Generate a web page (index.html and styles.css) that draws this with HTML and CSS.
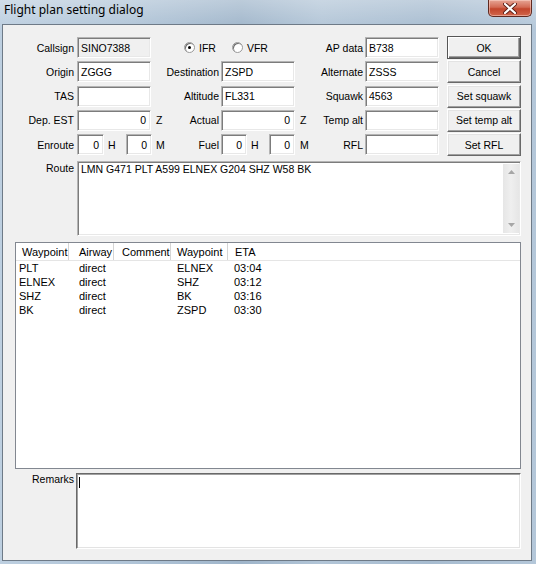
FILE: index.html
```html
<!DOCTYPE html>
<html>
<head>
<meta charset="utf-8">
<link rel="stylesheet" href="styles.css">
</head>
<body>
<div class="window">
  <div class="titlebar">
    <span class="title">Flight plan setting dialog</span>
    <div class="close">
      <svg width="14" height="11" viewBox="0 0 14 11"><path d="M2 1 L12 10 M12 1 L2 10" stroke="#5a1e16" stroke-width="4" stroke-linecap="round"/><path d="M2 1 L12 10 M12 1 L2 10" stroke="#ffffff" stroke-width="2.2" stroke-linecap="round"/></svg>
    </div>
  </div>
  <div class="client">
    <div class="form">
      <!-- row 1 -->
      <div class="lbl l1">Callsign</div>
      <div class="edit ro">SINO7388</div>
      <div class="radios">
        <span class="radio on"></span><span class="rtext">IFR</span>
        <span class="radio vfr"></span><span class="rtext">VFR</span>
      </div>
      <div class="lbl l3">AP data</div>
      <div class="edit">B738</div>
      <div class="sp"></div>
      <div class="btn default">OK</div>
      <!-- row 2 -->
      <div class="lbl l1">Origin</div>
      <div class="edit">ZGGG</div>
      <div class="lbl l2">Destination</div>
      <div class="edit">ZSPD</div>
      <div class="lbl l3">Alternate</div>
      <div class="edit">ZSSS</div>
      <div class="sp"></div>
      <div class="btn">Cancel</div>
      <!-- row 3 -->
      <div class="lbl l1">TAS</div>
      <div class="edit"></div>
      <div class="lbl l2">Altitude</div>
      <div class="edit">FL331</div>
      <div class="lbl l3">Squawk</div>
      <div class="edit">4563</div>
      <div class="sp"></div>
      <div class="btn">Set squawk</div>
      <!-- row 4 -->
      <div class="lbl l1">Dep. EST</div>
      <div class="edit num">0</div>
      <div class="lbl l2 unitrow"><span class="unit">Z</span><span>Actual</span></div>
      <div class="edit num">0</div>
      <div class="lbl l3 unitrow"><span class="unit">Z</span><span>Temp alt</span></div>
      <div class="edit"></div>
      <div class="sp"></div>
      <div class="btn">Set temp alt</div>
      <!-- row 5 -->
      <div class="lbl l1">Enroute</div>
      <div class="pair">
        <div class="edit num small a">0</div><span class="hu">H</span><div class="edit num small b">0</div>
      </div>
      <div class="lbl l2 unitrow"><span class="unit">M</span><span>Fuel</span></div>
      <div class="pair">
        <div class="edit num small b">0</div><span class="hu">H</span><div class="edit num small b">0</div>
      </div>
      <div class="lbl l3 unitrow"><span class="unit">M</span><span>RFL</span></div>
      <div class="edit"></div>
      <div class="sp"></div>
      <div class="btn">Set RFL</div>
    </div>

    <div class="route">
      <div class="lbl l1 top">Route</div>
      <div class="edit box">
        <div class="boxtext">LMN G471 PLT A599 ELNEX G204 SHZ W58 BK</div>
        <div class="vscroll">
          <svg width="7" height="4" viewBox="0 0 7 4"><path d="M0 4 L3.5 0 L7 4 Z" fill="#a6a6a6"/></svg>
          <svg width="7" height="4" viewBox="0 0 7 4"><path d="M0 0 L3.5 4 L7 0 Z" fill="#a6a6a6"/></svg>
        </div>
      </div>
    </div>

    <div class="list">
      <div class="lhead">
        <div class="hc c1">Waypoint</div>
        <div class="hc c2">Airway</div>
        <div class="hc c3">Comment</div>
        <div class="hc c4">Waypoint</div>
        <div class="hc c5">ETA</div>
      </div>
      <div class="lrow"><div class="bc c1">PLT</div><div class="bc c2">direct</div><div class="bc c3"></div><div class="bc c4">ELNEX</div><div class="bc c5">03:04</div></div>
      <div class="lrow"><div class="bc c1">ELNEX</div><div class="bc c2">direct</div><div class="bc c3"></div><div class="bc c4">SHZ</div><div class="bc c5">03:12</div></div>
      <div class="lrow"><div class="bc c1">SHZ</div><div class="bc c2">direct</div><div class="bc c3"></div><div class="bc c4">BK</div><div class="bc c5">03:16</div></div>
      <div class="lrow"><div class="bc c1">BK</div><div class="bc c2">direct</div><div class="bc c3"></div><div class="bc c4">ZSPD</div><div class="bc c5">03:30</div></div>
    </div>

    <div class="remarks">
      <div class="lbl rl top">Remarks</div>
      <div class="edit rbox"><span class="caret"></span></div>
    </div>
  </div>
</div>
</body>
</html>
```
FILE: styles.css
```css
* { box-sizing: border-box; }
body {
  margin: 0;
  width: 536px;
  height: 564px;
  overflow: hidden;
  font-family: "Liberation Sans", Arial, sans-serif;
  font-size: 10.5px;
  color: #000;
}
.window {
  width: 536px;
  height: 564px;
  display: flex;
  flex-direction: column;
  background:
    linear-gradient(180deg, rgba(255,255,255,0.3), rgba(255,255,255,0) 30px),
    linear-gradient(90deg, #bdcfe0 0%, #b0c4d7 25%, #9fb5ca 45%, #b2c5d7 60%, #a7bcd0 80%, #b4c7d9 100%);
}
.titlebar {
  height: 24px;
  position: relative;
  flex: none;
}
.title {
  display: block;
  font-family: "Noto Sans", "Open Sans", sans-serif;
  font-size: 12px;
  line-height: 16px;
  padding: 2px 0 0 4px;
  color: #000;
}
.close {
  position: absolute;
  left: 488px;
  top: 0;
  width: 44px;
  height: 17px;
  border: 1px solid #5f2920;
  border-top: none;
  border-radius: 0 0 5px 5px;
  background: linear-gradient(180deg, #e6a595 0%, #d36b55 45%, #c2452c 55%, #d1674c 100%);
  display: flex;
  align-items: center;
  justify-content: center;
  box-shadow: inset 0 0 0 1px rgba(255,220,210,0.5);
}
.client {
  margin-left: 2px;
  width: 530px;
  height: 537px;
  border: 1px solid #6e7a87;
  background: #f0f0f0;
  padding-top: 12px;
  flex: none;
}
.form {
  display: grid;
  grid-template-columns: 74px 74px 70px 74px 70px 74px 8px 74px;
  grid-auto-rows: 21px;
  row-gap: 3.25px;
}
.lbl {
  display: flex;
  align-items: center;
  justify-content: flex-end;
  white-space: nowrap;
}
.l1 { padding-right: 3px; }
.l2 { padding-right: 2px; }
.l3 { padding-right: 2px; }
.unitrow { justify-content: space-between; }
.unit { padding-left: 5px; }
.edit {
  background: #fff;
  border: 1px solid;
  border-color: #b4b4b4 #fff #fff #b4b4b4;
  box-shadow: inset 1px 1px 0 #7c7c7c, inset -1px -1px 0 #e8e8e8;
  padding: 0 3px 0 3px;
  display: flex;
  align-items: center;
  white-space: nowrap;
  overflow: hidden;
}
.edit.ro { background: #f0f0f0; }
.edit.num { justify-content: flex-end; padding-right: 4px; }
.pair {
  display: flex;
  align-items: stretch;
  width: 75px;
  overflow: visible;
}
.edit.small.a { width: 27px; }
.edit.small.b { width: 26px; }
.hu {
  width: 22px;
  padding-left: 4px;
  display: flex;
  align-items: center;
}
.radios {
  grid-column: span 2;
  display: flex;
  align-items: center;
  padding-left: 33px;
}
.radio {
  width: 11px;
  height: 11px;
  border-radius: 50%;
  background: #fff;
  border: 1px solid #9a9a9a;
  box-shadow: inset 1px 1px 0 #707070;
  position: relative;
  margin-right: 4px;
}
.radio.on::after {
  content: "";
  position: absolute;
  left: 3px;
  top: 3px;
  width: 3px;
  height: 3px;
  border-radius: 50%;
  background: #000;
}
.radio.vfr { margin-left: 16px; }
.rtext { line-height: 12px; }
.btn {
  margin-top: -1px;
  height: 23px;
  background: #f0f0f0;
  border: 1px solid;
  border-color: #fff #696969 #696969 #fff;
  box-shadow: inset -1px -1px 0 #a0a0a0, inset 1px 1px 0 #e3e3e3;
  display: flex;
  align-items: center;
  justify-content: center;
  white-space: nowrap;
}
.btn.default {
  border: 1px solid #555;
  box-shadow: inset 1px 1px 0 #fff, inset -1px -1px 0 #696969, inset -2px -2px 0 #a0a0a0;
}
.route {
  margin-top: 6px;
  display: grid;
  grid-template-columns: 74px 444px;
  height: 75px;
}
.lbl.top { align-items: flex-start; padding-top: 1px; }
.edit.box {
  align-items: stretch;
  padding: 0;
}
.boxtext {
  flex: 1;
  padding: 1px 0 0 3px;
  line-height: 13px;
}
.vscroll {
  width: 16px;
  margin: 2px 1px 2px 0;
  background: linear-gradient(90deg, #e6e6e6, #efefef 50%, #e6e6e6);
  display: flex;
  flex-direction: column;
  justify-content: space-between;
  align-items: center;
  padding: 6px 0 6px;
}
.list {
  margin: 6px 0 0 12px;
  width: 506px;
  height: 227px;
  background: #fff;
  border: 1px solid #828790;
  font-size: 11px;
}
.lhead {
  display: grid;
  grid-template-columns: 53px 45px 57px 57px 1fr;
  height: 18px;
  border-bottom: 1px solid #e5e5e5;
}
.hc {
  display: flex;
  align-items: center;
  border-right: 1px solid #d5d5d5;
  white-space: nowrap;
}
.hc.c5 { border-right: none; }
.hc.c1 { padding-left: 6px; }
.hc.c2 { padding-left: 10px; }
.hc.c3 { padding-left: 8px; }
.hc.c4 { padding-left: 6px; }
.hc.c5 { padding-left: 7px; }
.lrow {
  display: grid;
  grid-template-columns: 53px 45px 57px 57px 1fr;
  height: 14px;
  line-height: 14px;
}
.bc { white-space: nowrap; }
.bc.c1 { padding-left: 3px; }
.bc.c2 { padding-left: 10px; }
.bc.c4 { padding-left: 6px; }
.bc.c5 { padding-left: 6px; }
.remarks {
  margin-top: 4px;
  display: grid;
  grid-template-columns: 73px 445px;
  height: 76px;
}
.rl { padding-right: 2px; }
.remarks .lbl.top { padding-top: 0; }
.edit.rbox {
  border-color: #696969 #fff #fff #696969;
  box-shadow: inset 1px 1px 0 #a0a0a0, inset -1px -1px 0 #e3e3e3;
  align-items: flex-start;
  padding: 3px 0 0 2px;
}
.caret {
  display: block;
  width: 1px;
  height: 11px;
  background: #000;
}
```
